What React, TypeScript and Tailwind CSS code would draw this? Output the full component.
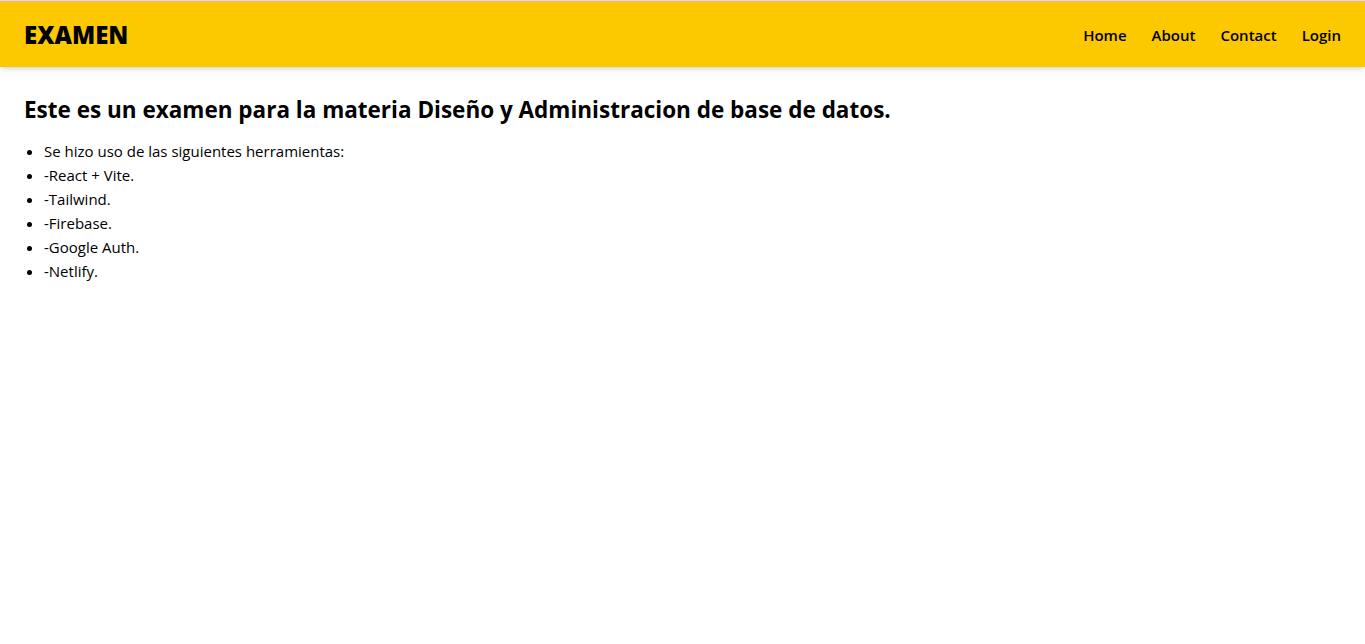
const tools = [
  "Se hizo uso de las siguientes herramientas:",
  "-React + Vite.",
  "-Tailwind.",
  "-Firebase.",
  "-Google Auth.",
  "-Netlify.",
];

const links = ["Home", "About", "Contact", "Login"];

const App = () => {
  return (
    <div className="min-h-screen bg-white font-['Open_Sans',sans-serif] text-black">
      <div className="h-px bg-[#fbd8b4]" />
      <div className="h-px bg-[#dcbf96]" />
      <nav className="flex h-[65px] items-center justify-between bg-[#fcc800] px-6 shadow-md">
        <h1 className="text-2xl font-extrabold">EXAMEN</h1>
        <ul className="flex gap-[25px]">
          {links.map((link) => (
            <li key={link}>
              <a href="#" className="text-[15px] font-semibold">
                {link}
              </a>
            </li>
          ))}
        </ul>
      </nav>
      <main className="p-6">
        <h2 className="mt-[3px] text-[22.5px] leading-8 font-bold">
          Este es un examen para la materia Diseño y Administracion de base de
          datos.
        </h2>
        <ul className="mt-[13px] list-disc pl-5">
          {tools.map((tool) => (
            <li key={tool} className="text-[15px] leading-6">
              {tool}
            </li>
          ))}
        </ul>
      </main>
    </div>
  );
};

export default App;
